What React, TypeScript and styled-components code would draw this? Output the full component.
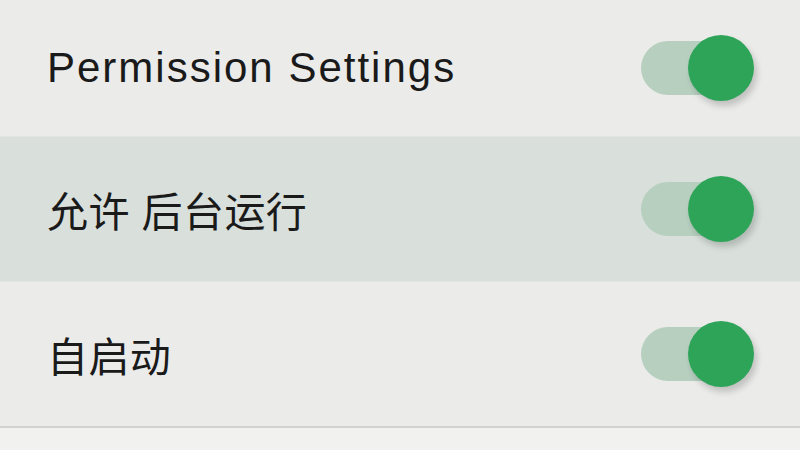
import React, { useState } from 'react';
import styled, { createGlobalStyle } from 'styled-components';

const GlobalStyle = createGlobalStyle`
  html, body {
    margin: 0;
    padding: 0;
    background: #f1f1f0;
  }
  body {
    font-family: 'Liberation Sans', 'Noto Sans CJK SC', sans-serif;
  }
`;

const List = styled.div`
  width: 800px;
  height: 450px;
  display: flex;
  flex-direction: column;
  background: #f1f1f0;
  overflow: hidden;
`;

const Row = styled.div<{ $active?: boolean; $height: number; $last?: boolean }>`
  height: ${p => p.$height}px;
  display: flex;
  align-items: center;
  justify-content: space-between;
  padding: 0 45px 0 47px;
  background: ${p => (p.$active ? '#d9e0db' : '#ebebea')};
  border-bottom: ${p => (p.$last ? '2px solid #d2d2d1' : '1px solid #e2e4e2')};
  box-sizing: border-box;
`;

const Label = styled.span<{ $latin?: boolean }>`
  font-size: ${p => (p.$latin ? '42px' : '41px')};
  color: #1a1a1a;
  letter-spacing: ${p => (p.$latin ? '2px' : '0.4px')};
`;

const Toggle = styled.button<{ $on: boolean }>`
  position: relative;
  width: 112px;
  height: 70px;
  margin-top: 4px;
  border: none;
  background: transparent;
  padding: 0;
  cursor: pointer;

  &::before {
    content: '';
    position: absolute;
    left: -2px;
    top: 6px;
    width: 90px;
    height: 54px;
    border-radius: 27px;
    background: ${p => (p.$on ? '#b6cfbf' : '#c9c9c9')};
  }

  &::after {
    content: '';
    position: absolute;
    top: 0;
    left: ${p => (p.$on ? '45px' : '0')};
    width: 66px;
    height: 66px;
    border-radius: 50%;
    background: ${p => (p.$on ? '#2ea459' : '#fafafa')};
    box-shadow: 3px 5px 6px rgba(0, 0, 0, 0.18);
  }
`;

const items = [
  { label: 'Permission Settings', height: 137, latin: true },
  { label: '允许 后台运行', height: 145, active: true },
  { label: '自启动', height: 146, last: true },
];

export default function App() {
  const [state, setState] = useState([true, true, true]);

  return (
    <>
      <GlobalStyle />
      <List>
        {items.map((item, i) => (
          <Row key={item.label} $height={item.height} $active={item.active} $last={item.last}>
            <Label $latin={item.latin}>{item.label}</Label>
            <Toggle
              $on={state[i]}
              aria-label={item.label}
              onClick={() => setState(s => s.map((v, j) => (j === i ? !v : v)))}
            />
          </Row>
        ))}
      </List>
    </>
  );
}
